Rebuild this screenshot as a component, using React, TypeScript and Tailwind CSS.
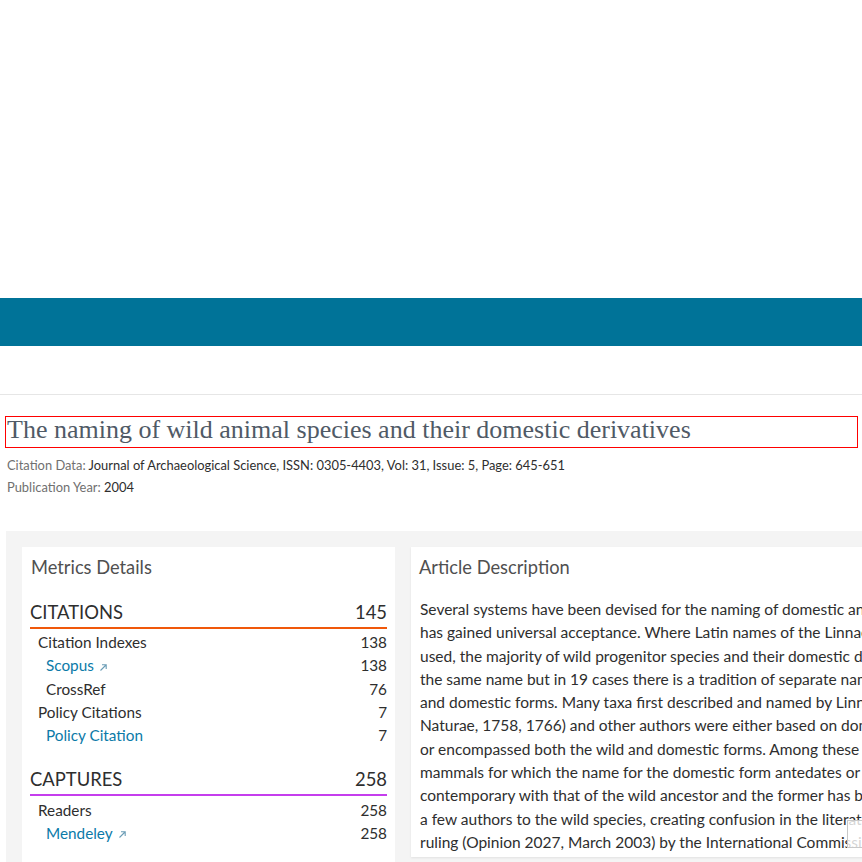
import React from "react";

const sans = { fontFamily: "Lato, 'Open Sans', sans-serif" };
const serif = { fontFamily: "'Liberation Serif', serif" };

const lines = [
  "Several systems have been devised for the naming of domestic animals but none",
  "has gained universal acceptance. Where Latin names of the Linnaean type are",
  "used, the majority of wild progenitor species and their domestic derivatives share",
  "the same name but in 19 cases there is a tradition of separate names for the wild",
  "and domestic forms. Many taxa first described and named by Linnaeus (Systema",
  "Naturae, 1758, 1766) and other authors were either based on domestic animals",
  "or encompassed both the wild and domestic forms. Among these are 17 species of",
  "mammals for which the name for the domestic form antedates or is",
  "contemporary with that of the wild ancestor and the former has been applied by",
  "a few authors to the wild species, creating confusion in the literature. A recent",
  "ruling (Opinion 2027, March 2003) by the International Commission on",
];

function Arrow() {
  return (
    <svg width="9" height="9" viewBox="0 0 9 9" className="inline-block ml-[5px] mb-[1px]">
      <path d="M1.5 7.5 L7 2 M3 1.8 H7.2 V6" fill="none" stroke="#6b9db6" strokeWidth="1.1" />
    </svg>
  );
}

function Row({ label, value, level, link, arrow }: { label: string; value: string; level: 1 | 2; link?: boolean; arrow?: boolean }) {
  return (
    <div className={`flex justify-between h-[23.3px] items-center text-[15.3px] ${level === 1 ? "pl-[8px]" : "pl-[16px]"}`}>
      <span className={link ? "text-[#0b7aa8]" : "text-[#2e2e2e]"}>
        {label}
        {arrow && <Arrow />}
      </span>
      <span className="text-[#2e2e2e]">{value}</span>
    </div>
  );
}

export default function App() {
  return (
    <div className="w-full h-[862px] overflow-hidden bg-white relative" style={sans}>
      <div className="h-[298px]" />
      <div className="h-[48px] bg-[#007398]" />
      <div className="h-[49px] border-b border-[#e6e6e6]" />
      <div className="pl-[5px] pr-[4px] pt-[21px]">
        <div className="border border-[#ff0000] h-[32px] flex items-center pl-[1px] overflow-hidden">
          <h1 className="text-[26px] text-[#505a66] leading-none whitespace-nowrap -mt-[4px]" style={serif}>
            The naming of wild animal species and their domestic derivatives
          </h1>
        </div>
      </div>
      <div className="pl-[7px] pt-[6px] text-[12.9px] leading-[22px]">
        <div>
          <span className="text-[#707070]">Citation Data: </span>
          <span className="text-[#2e2e2e]">Journal of Archaeological Science, ISSN: 0305-4403, Vol: 31, Issue: 5, Page: 645-651</span>
        </div>
        <div>
          <span className="text-[#707070]">Publication Year: </span>
          <span className="text-[#2e2e2e]">2004</span>
        </div>
      </div>
      <div className="mt-[33px] ml-[6px] bg-[#f4f4f4] pt-[16px] pl-[16px] flex gap-[16px] h-[400px] overflow-hidden">
        <div className="w-[373px] shrink-0 bg-white px-[8px] pt-[8px] h-[400px]">
          <div className="text-[18.3px] text-[#505050] h-[25px] leading-[25px] pl-[1px]">Metrics Details</div>
          <div className="mt-[20px]">
            <div className="flex justify-between items-end text-[18.4px] text-[#2e2e2e] h-[25px] leading-[25px]">
              <span>CITATIONS</span>
              <span>145</span>
            </div>
            <div className="h-[2px] bg-[#f0580a] mt-[2px] mb-[2px]" />
            <Row label="Citation Indexes" value="138" level={1} />
            <Row label="Scopus" value="138" level={2} link arrow />
            <Row label="CrossRef" value="76" level={2} />
            <Row label="Policy Citations" value="7" level={1} />
            <Row label="Policy Citation" value="7" level={2} link />
          </div>
          <div className="mt-[20px]">
            <div className="flex justify-between items-end text-[18.4px] text-[#2e2e2e] h-[25px] leading-[25px]">
              <span>CAPTURES</span>
              <span>258</span>
            </div>
            <div className="h-[2px] bg-[#c53ded] mt-[2px] mb-[2px]" />
            <Row label="Readers" value="258" level={1} />
            <Row label="Mendeley" value="258" level={2} link arrow />
          </div>
        </div>
        <div className="w-[640px] shrink-0 bg-white px-[8px] pt-[8px] h-[310px] shadow-[0_1px_2px_rgba(0,0,0,0.08)]">
          <div className="text-[18.3px] text-[#505050] h-[25px] leading-[25px]">Article Description</div>
          <div className="mt-[18px] text-[15.5px] text-[#2e2e2e] leading-[23.3px] pl-[1px]">
            {lines.map((l, i) => (
              <div key={i} className="whitespace-nowrap">{l}</div>
            ))}
          </div>
        </div>
      </div>
      <div className="absolute left-[847px] top-[820px] w-[20px] h-[28px] border border-[#c8c8c8] bg-white/80" />
    </div>
  );
}
